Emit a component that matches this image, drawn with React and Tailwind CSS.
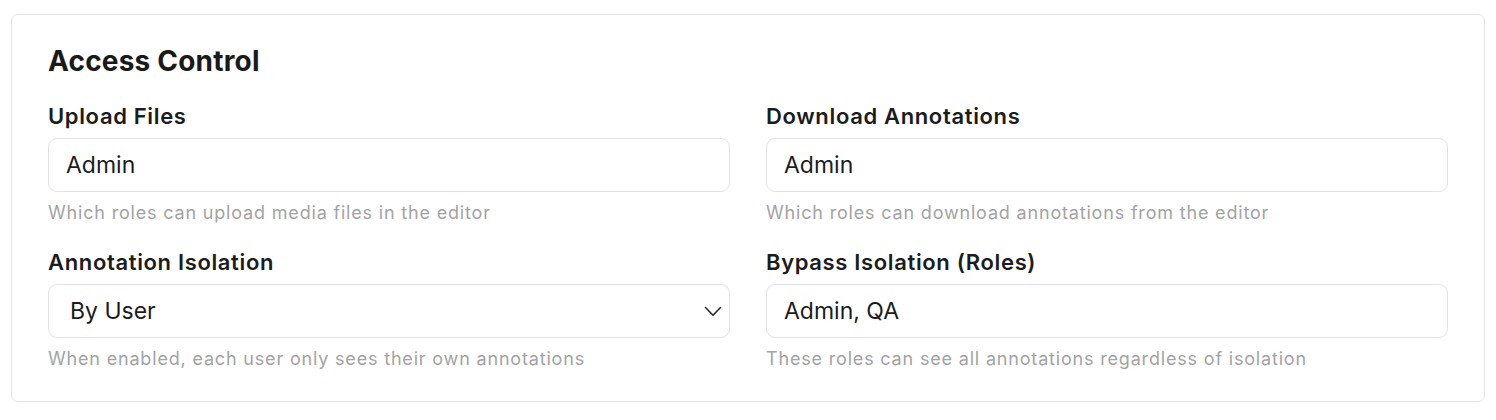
import React from "react";

function Chevron() {
  return (
    <svg width="18" height="11" viewBox="0 0 18 11" fill="none" stroke="#2a2a2a" strokeWidth="1.6" strokeLinecap="round" strokeLinejoin="round">
      <path d="M1.5 1.5L9 9.2L16.5 1.5" />
    </svg>
  );
}

function Field({ label, value, help, select }) {
  return (
    <div className="flex flex-col">
      <div className="text-[22px] leading-[28px] font-semibold tracking-[0.65px] text-[#1c1c1c]">{label}</div>
      <div className="mt-[8px] h-[54px] rounded-[9px] border border-[#e2e2e2] bg-white flex items-center justify-between">
        <span className={(select ? "pl-[21px]" : "pl-[17px]") + " text-[23px] text-[#1c1c1c]"}>{value}</span>
        {select && (
          <span className="pr-[7px] flex items-center">
            <Chevron />
          </span>
        )}
      </div>
      <div className="mt-[9px] text-[18px] leading-[24px] tracking-[0.82px] text-[#a3a3a3]">{help}</div>
    </div>
  );
}

export default function App() {
  return (
    <div className="bg-white w-[1496px] h-[420px] pt-[14px] px-[11px]" style={{ fontFamily: "Inter, 'Noto Sans', sans-serif" }}>
      <div className="rounded-[7px] border border-[#e5e5e5] px-[36px] pt-[29px] h-[388px]">
        <h2 className="text-[28px] leading-[34px] font-bold tracking-[0.2px] text-[#1a1a1a]">Access Control</h2>
        <div className="mt-[24px] grid grid-cols-2 gap-x-[36px] gap-y-[23px]">
          <Field label="Upload Files" value="Admin" help="Which roles can upload media files in the editor" />
          <Field label="Download Annotations" value="Admin" help="Which roles can download annotations from the editor" />
          <Field label="Annotation Isolation" value="By User" help="When enabled, each user only sees their own annotations" select />
          <Field label="Bypass Isolation (Roles)" value="Admin, QA" help="These roles can see all annotations regardless of isolation" />
        </div>
      </div>
    </div>
  );
}
